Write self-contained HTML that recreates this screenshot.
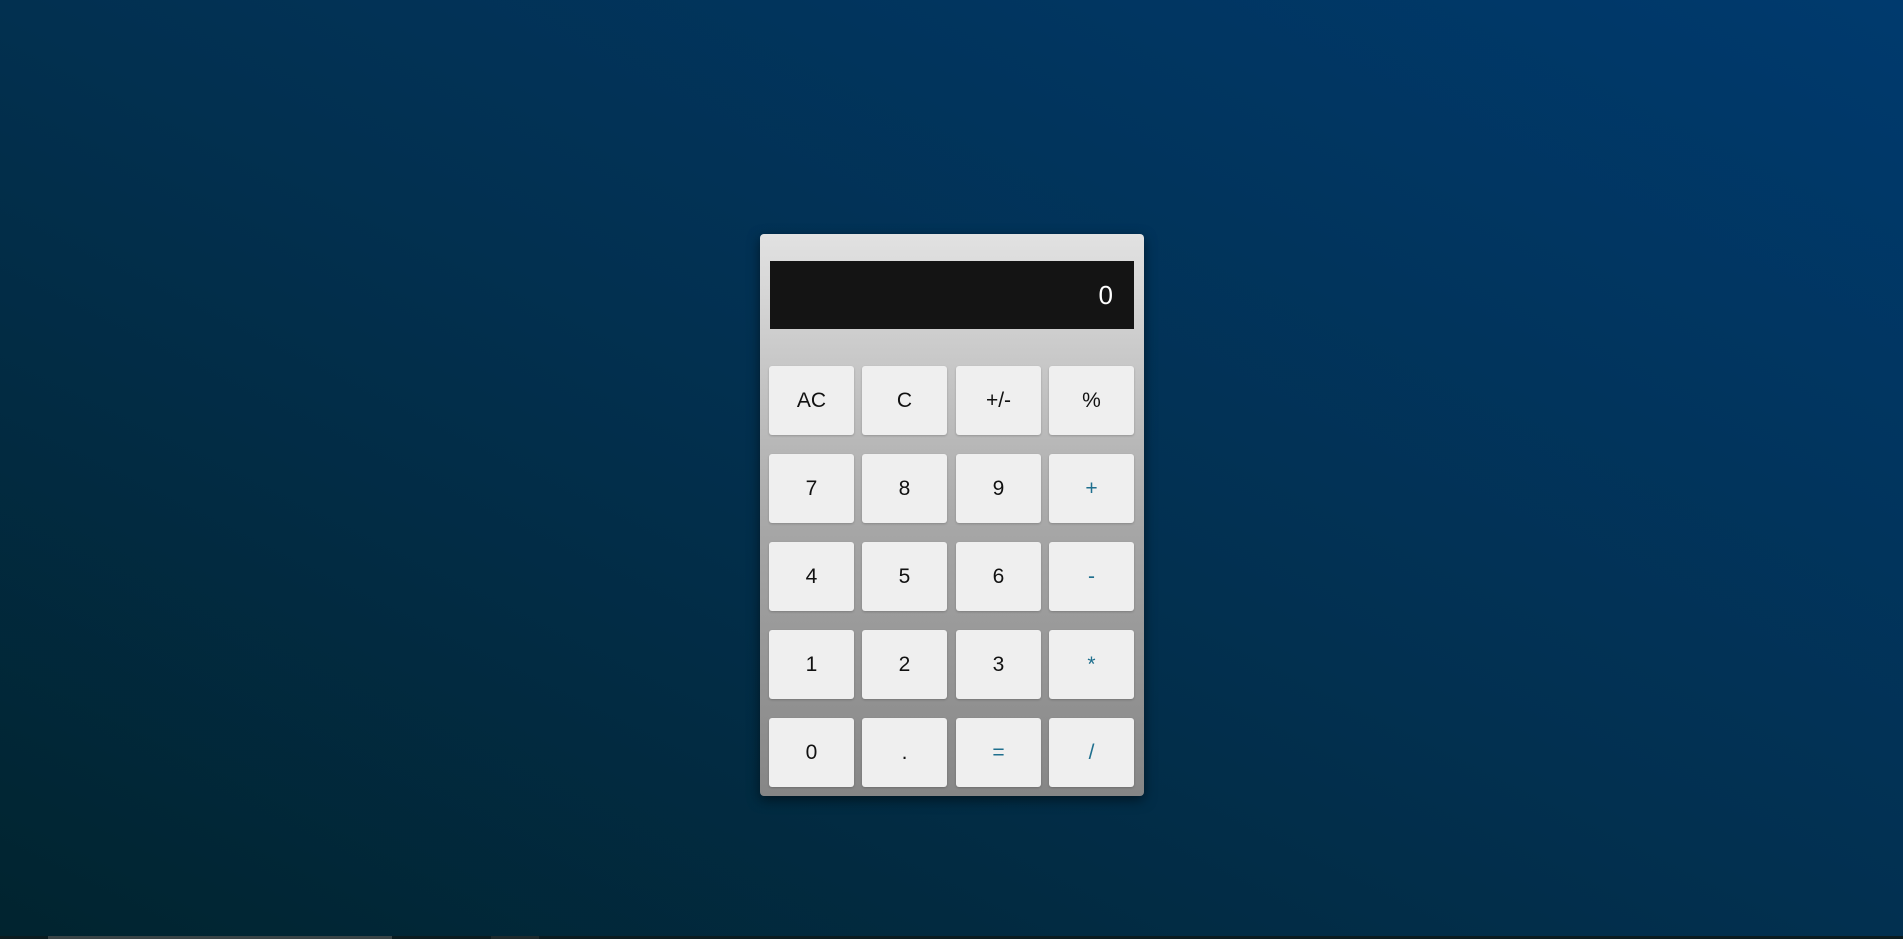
<!DOCTYPE html>
<html><head><meta charset="utf-8"><style>
html,body{margin:0;padding:0;width:1903px;height:939px;overflow:hidden}
body{background:linear-gradient(to top right,#01242f 0%,#023050 50%,#003a6e 100%);font-family:"Liberation Sans",Arial,sans-serif;position:relative}
.calc{position:absolute;left:760px;top:234px;width:384px;height:562px;border-radius:4px;background:linear-gradient(#e2e2e2,#cbcbcb 20%,#a4a4a4 55%,#868686);box-shadow:0 4px 12px rgba(0,0,0,.5)}
.disp{position:absolute;left:10px;top:27px;width:364px;height:68px;background:#141414;color:#fff;font-size:26px;text-align:right;line-height:68px;box-sizing:border-box;padding-right:21px}
.b{position:absolute;width:85px;height:69px;background:#efefef;border-radius:3px;text-align:center;line-height:69px;font-size:21px;color:#111;box-shadow:0 1px 2px rgba(0,0,0,.2)}
.o{color:#1f6f8e}
.bar{position:absolute;left:0;top:936px;width:1903px;height:3px;background:#0c1c20}
.bar i{position:absolute;left:48px;top:0;width:344px;height:3px;background:#3a4446}
.bar s{position:absolute;left:491px;top:0;width:48px;height:3px;background:#1f2a2c}
</style></head><body>
<div class="calc">
<div class="disp">0</div>
<div class="b" style="left:9px;top:132px">AC</div><div class="b" style="left:102px;top:132px">C</div><div class="b" style="left:196px;top:132px">+/-</div><div class="b" style="left:289px;top:132px">%</div>
<div class="b" style="left:9px;top:220px">7</div><div class="b" style="left:102px;top:220px">8</div><div class="b" style="left:196px;top:220px">9</div><div class="b o" style="left:289px;top:220px">+</div>
<div class="b" style="left:9px;top:308px">4</div><div class="b" style="left:102px;top:308px">5</div><div class="b" style="left:196px;top:308px">6</div><div class="b o" style="left:289px;top:308px">-</div>
<div class="b" style="left:9px;top:396px">1</div><div class="b" style="left:102px;top:396px">2</div><div class="b" style="left:196px;top:396px">3</div><div class="b o" style="left:289px;top:396px">*</div>
<div class="b" style="left:9px;top:484px">0</div><div class="b" style="left:102px;top:484px">.</div><div class="b o" style="left:196px;top:484px">=</div><div class="b o" style="left:289px;top:484px">/</div>
</div>
<div class="bar"><i></i><s></s></div>
</body></html>
